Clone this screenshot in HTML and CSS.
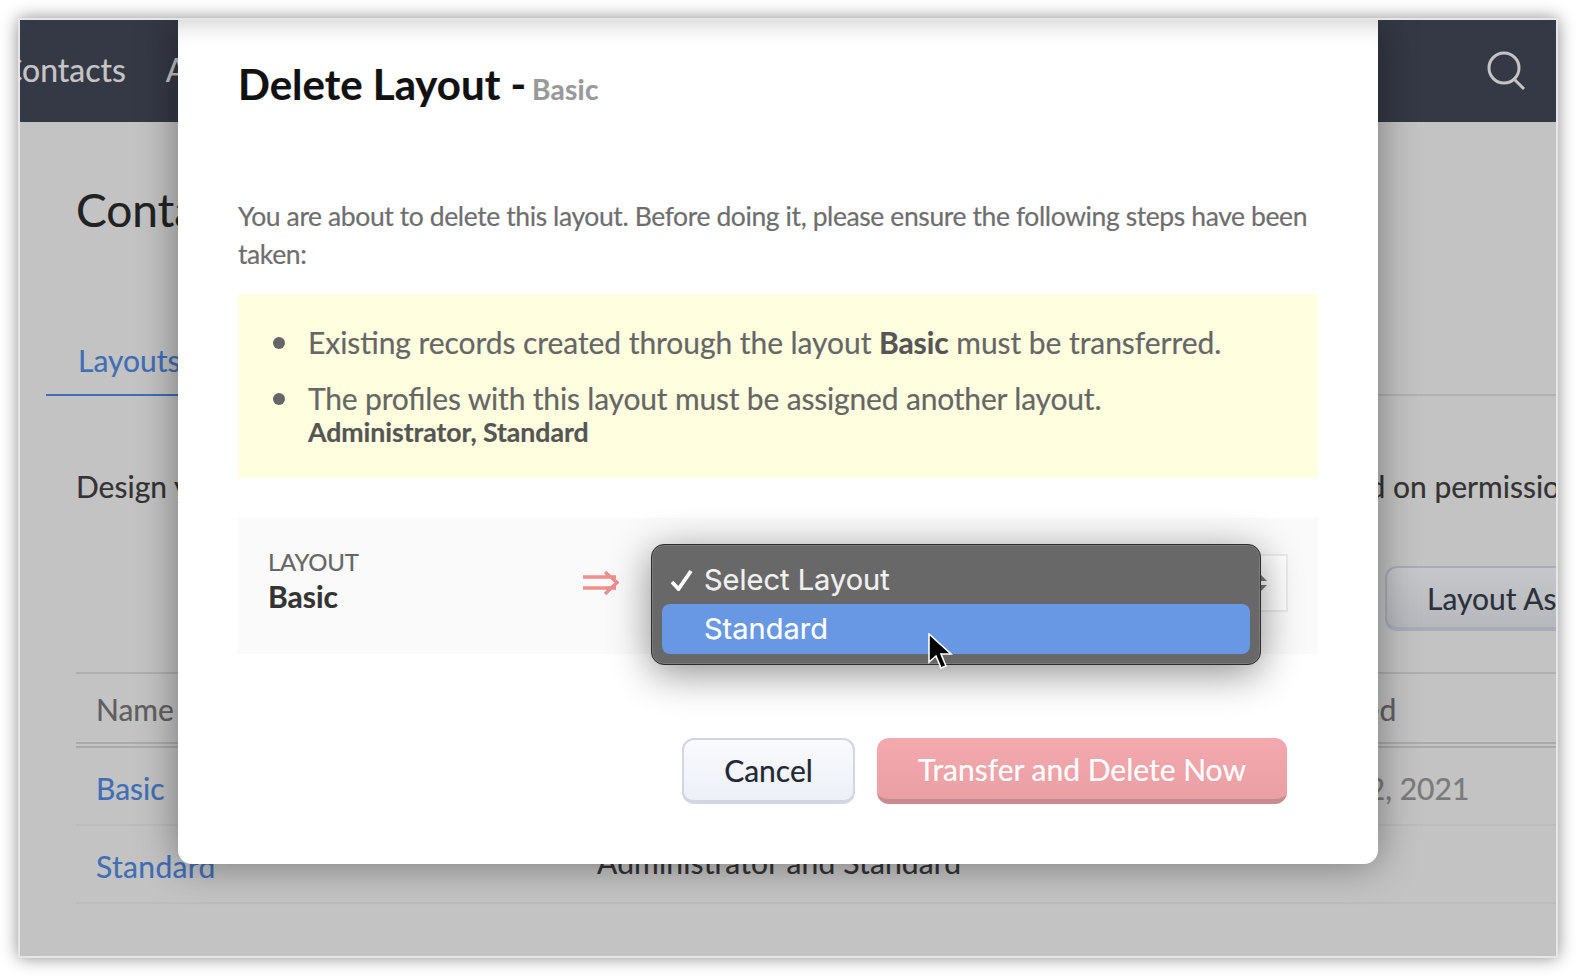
FILE: index.html
```html
<!DOCTYPE html>
<html lang="en">
<head>
    <meta charset="UTF-8">
    <title>Delete Layout</title>
    <link rel="stylesheet" href="styles.css">
</head>
<body>
<div class="window">
    <header class="topbar">
        <nav class="topnav">
            <span>Contacts</span>
            <span>Accounts</span>
        </nav>
        <svg class="search-icon" width="40" height="40" viewBox="0 0 40 40">
            <circle cx="18" cy="17" r="15" fill="none" stroke="#c4c4c4" stroke-width="3"/>
            <path d="M28 28 L38 38" stroke="#c4c4c4" stroke-width="3" fill="none"/>
        </svg>
    </header>

    <main class="content">
        <h1 class="page-title">Contacts</h1>
        <div class="tabs"><span class="tab">Layouts</span></div>
        <p class="intro"><span class="intro-left">Design your layouts</span><span>based on permissions for each of your users</span></p>
        <div class="toolbar"><button class="btn-assign">Layout Assignment</button></div>
        <div class="table">
            <div class="row head"><span>Name</span><span>Assigned to</span><span>Added</span></div>
            <div class="row"><a>Basic</a><span>Administrator</span><span class="muted">Jan 12, 2021</span></div>
            <div class="row"><a>Standard</a><span class="dark">Administrator and Standard</span><span></span></div>
        </div>
    </main>

    <section class="modal">
        <h2 class="modal-title">Delete Layout - <small>Basic</small></h2>
        <p class="modal-text">You are about to delete this layout. Before doing it, please ensure the following steps have been taken:</p>
        <ul class="notes">
            <li>Existing records created through the layout <b>Basic</b> must be transferred.</li>
            <li>The profiles with this layout must be assigned another layout.<strong>Administrator, Standard</strong></li>
        </ul>
        <div class="transfer">
            <div class="from">
                <span class="from-label">LAYOUT</span>
                <span class="from-name">Basic</span>
            </div>
            <svg class="arrow" width="36" height="24" viewBox="0 0 36 24">
                <path d="M0 6 H33 M0 17 H33 M22 1 L34 11.5 L22 23" fill="none" stroke="#f08d8d" stroke-width="3.4"/>
            </svg>
            <div class="select-box"></div>

            <div class="dropdown">
                <div class="option">
                    <svg class="check" width="24" height="22" viewBox="0 0 24 22">
                        <path d="M2 13 L8.5 20 L21 2" fill="none" stroke="#fff" stroke-width="3.8"/>
                    </svg>
                    Select Layout
                </div>
                <div class="option active">Standard</div>
            </div>
            <svg class="cursor" width="26" height="38" viewBox="0 0 26 38">
                <path d="M2 1 L2 29 L9 23 L14 35 L19 33 L14 21 L24 21 Z" fill="#000" stroke="#fff" stroke-width="1.6"/>
            </svg>
        </div>
        <div class="actions">
            <button class="btn-cancel">Cancel</button>
            <button class="btn-delete">Transfer and Delete Now</button>
        </div>
    </section>
</div>
</body>
</html>
```

FILE: styles.css
```css
* { box-sizing: border-box; }
html, body { height: 100%; }
body { margin: 0; background: #fff; font-family: Lato, "Open Sans", sans-serif; -webkit-text-stroke: .2px; padding: 18px; overflow: hidden; }

.window { position: relative; width: 1540px; height: 940px; background: #c3c3c3; border: 2px solid #e6e6e6; overflow: hidden; box-shadow: 0 0 16px rgba(0,0,0,.45); }

.topbar { height: 102px; background: #353945; display: flex; align-items: center; justify-content: space-between; overflow: hidden; }
.topnav { display: flex; gap: 40px; margin: -4px 0 0 -19px; font-size: 32px; color: #c6c6c6; }
.search-icon { margin-right: 30px; margin-top: -1px; }

.content { padding-left: 56px; color: #333; font-size: 30px; }
.page-title { margin: 0; padding-top: 60px; height: 170px; font-size: 46px; line-height: 56px; font-weight: 400; color: #222; }
.tabs { height: 104px; margin-left: -30px; border-bottom: 2px solid #b2b2b2; display: flex; align-items: flex-end; }
.tab { width: 200px; height: 51px; padding-left: 32px; line-height: 30px; color: #3f6eb5; border-bottom: 2px solid #3f6eb5; margin-bottom: -2px; }
.intro { margin: 0; height: 276px; padding-top: 70px; line-height: 40px; white-space: nowrap; display: flex; color: #333; }
.intro-left { width: 1232px; flex: none; }
.toolbar { height: 0; display: flex; }
.btn-assign { margin: -106px 0 0 1309px; flex: none; width: 300px; height: 65px; padding: 0 0 0 40px; text-align: left; white-space: nowrap; font: 30px Lato, sans-serif; color: #2b303b; background: linear-gradient(#c6c7ca, #b6b8bd); border: 2px solid #aaacb5; border-bottom-width: 4px; border-radius: 12px; }

.table { border-top: 2px solid #afafaf; }
.row { display: grid; grid-template-columns: 500px 703px 1fr; height: 78px; align-items: center; padding: 3px 0 0 20px; border-bottom: 2px solid #bcbcbc; white-space: nowrap; }
.row.head { height: 74px; padding-top: 2px; color: #5f5f5f; border-bottom: 6px double #aaa; }
.row.head span:last-child { padding-left: 11px; }
.row a { color: #3f6eb5; }
.row:last-child a { letter-spacing: .35px; }
.muted { color: #7a7a7a; }
.dark { margin: 0 0 8px 1px; letter-spacing: .15px; color: #333; }

.modal { position: absolute; left: 158px; top: 0; width: 1200px; height: 844px; padding: 0 60px; background: #fff; border-radius: 0 0 14px 14px; box-shadow: 0 0 40px rgba(0,0,0,.4), inset 0 26px 26px -24px rgba(0,0,0,.22); }
.modal-title { margin: 0; padding-top: 36px; height: 177px; font-size: 42px; line-height: 56px; font-weight: 700; color: #111; }
.modal-title small { margin-left: -4.5px; font-size: 28px; font-weight: 700; letter-spacing: .3px; color: #999; }
.modal-text { margin: 0; height: 77px; font-size: 26.5px; line-height: 38px; letter-spacing: -.4px; font-feature-settings: "liga" 1; color: #6e6e6e; }
.notes { margin: 20px 0 0; padding: 26px 0 0 30px; height: 184px; list-style: none; background: #ffffe0; font-size: 30px; line-height: 44px; letter-spacing: -.06px; font-feature-settings: "liga" 1; color: #666; }
.notes li { position: relative; padding-left: 40px; margin-bottom: 12px; }
.notes li + li { letter-spacing: -.17px; }
.notes li::before { content: ""; position: absolute; left: 5px; top: 17px; width: 12px; height: 12px; border-radius: 50%; background: #666; }
.notes b { color: #555; }
.notes strong { display: block; font-size: 26.7px; line-height: 25px; letter-spacing: -.06px; color: #555; }

.transfer { position: relative; margin-top: 40px; height: 136px; padding: 0 30px; display: flex; align-items: center; background: #fafafa; }
.from { width: 314px; margin-top: -12px; display: flex; flex-direction: column; color: #666; }
.from-label { font-size: 24px; line-height: 32px; letter-spacing: -.2px; }
.from-name { font-size: 30px; line-height: 36px; font-weight: 700; color: #333; }
.arrow { flex: none; margin: -6px 0 0 1px; }
.select-box { flex: none; margin: -6px 0 0 33px; width: 636px; height: 58px; background: #fff; border: 2px solid #ececec; position: relative; }
.select-box::before, .select-box::after { content: ""; position: absolute; right: 19px; border: 6px solid transparent; }
.select-box::before { top: 13px; border-bottom-color: #777; }
.select-box::after { top: 29px; border-top-color: #777; }

.dropdown { position: absolute; left: 413px; top: 26px; width: 610px; height: 121px; padding: 0 10px; background: #686868; border: 1px solid #2c2c2c; border-radius: 13px; box-shadow: 0 8px 40px rgba(0,0,0,.45), inset 0 0 0 1px #7d7d7d; font-family: Inter, sans-serif; font-size: 29px; color: #f1f1f1; }
.option { height: 50px; padding-left: 42px; line-height: 50px; position: relative; }
.option:first-child { margin-top: 9px; line-height: 52px; }
.option.active { background: #6897e4; color: #fff; border-radius: 8px; }
.check { position: absolute; left: 8px; top: 15px; }
.cursor { position: absolute; left: 689px; top: 115px; }

.actions { display: flex; justify-content: flex-end; gap: 22px; padding: 84px 31px 0 0; }
.actions button { height: 66px; border-radius: 12px; font: 30px Lato, sans-serif; }
.btn-cancel { width: 173px; color: #222733; background: linear-gradient(#f9fafd, #ecf0f7); border: 2px solid #d2d5e2; border-bottom-width: 4px; }
.btn-delete { width: 410px; color: #fff; background: linear-gradient(#f3a9ad, #e99fa3); border: none; border-bottom: 5px solid #c88b8f; }
```
